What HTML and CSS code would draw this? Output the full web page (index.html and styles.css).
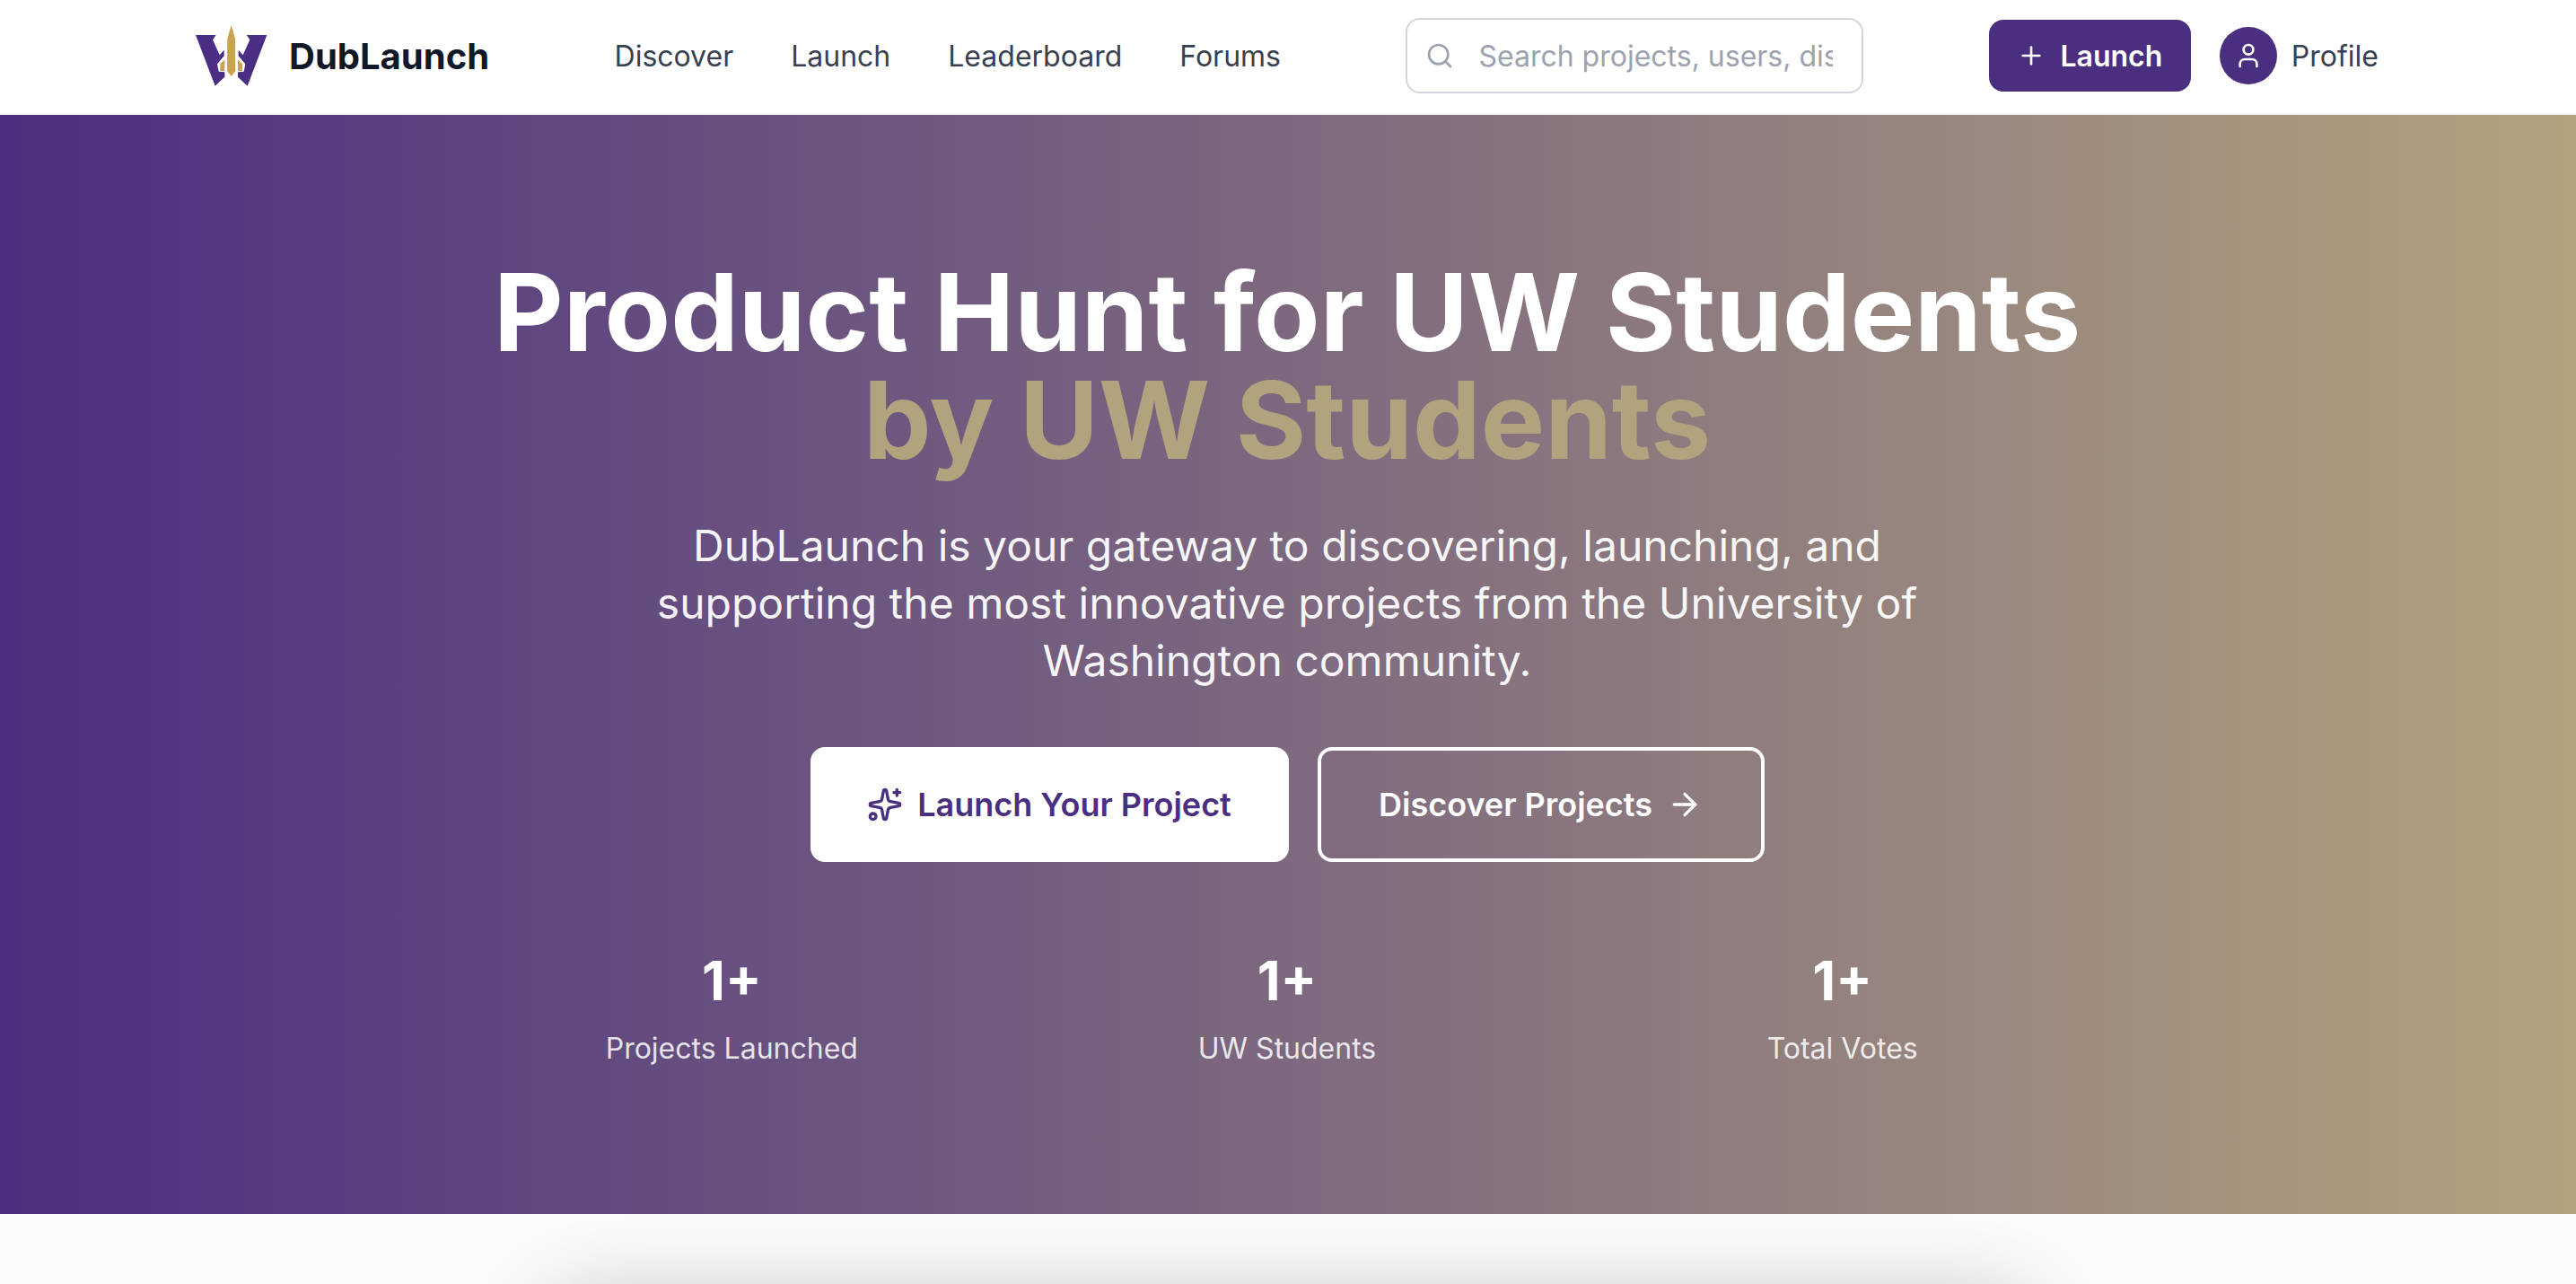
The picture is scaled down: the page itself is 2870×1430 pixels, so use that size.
FILE: index.html
```html
<!DOCTYPE html>
<html lang="en">
<head>
    <meta charset="UTF-8">
    <title>DubLaunch</title>
    <link rel="stylesheet" href="styles.css">
</head>
<body>

<header class="navbar">
    <div class="nav-inner">
        <a href="#" class="brand">
            <svg class="brand-logo" viewBox="40 25 240 204">
                <polygon class="logo-purple" points="40,58 108,58 97,74 120,125 135,108 135,128 112,155 117,180 137,182 137,198 105,228"/>
                <polygon class="logo-purple" points="278,58 210,58 221,74 198,125 183,108 183,128 206,155 201,180 181,182 181,198 213,228"/>
                <polygon class="logo-gold" points="159,25 172,70 173,178 159,196 145,178 146,70"/>
                <polygon class="logo-gold" points="122,155 137,140 137,178 122,178"/>
                <polygon class="logo-gold" points="196,155 181,140 181,178 196,178"/>
            </svg>
            <span>DubLaunch</span>
        </a>

        <nav class="nav-links">
            <a href="#">Discover</a>
            <a href="#">Launch</a>
            <a href="#">Leaderboard</a>
            <a href="#">Forums</a>
        </nav>

        <div class="search-box">
            <svg class="icon search-icon" viewBox="0 0 24 24"><circle cx="11" cy="11" r="8"/><path d="m21 21-4.3-4.3"/></svg>
            <input type="text" placeholder="Search projects, users, discussions...">
        </div>

        <div class="nav-actions">
            <a href="#" class="launch-btn">
                <svg class="icon" viewBox="0 0 24 24"><path d="M5 12h14"/><path d="M12 5v14"/></svg>
                Launch
            </a>
            <a href="#" class="profile-link">
                <span class="avatar">
                    <svg class="icon" viewBox="0 0 24 24"><path d="M19 21v-2a4 4 0 0 0-4-4H9a4 4 0 0 0-4 4v2"/><circle cx="12" cy="7" r="4"/></svg>
                </span>
                Profile
            </a>
        </div>
    </div>
</header>

<section class="hero">
    <h1>Product Hunt for UW Students<br><span class="gold">by UW Students</span></h1>
    <p class="hero-text">DubLaunch is your gateway to discovering, launching, and supporting the most innovative projects from the University of Washington community.</p>

    <div class="hero-buttons">
        <a href="#" class="btn btn-white">
            <svg class="icon" viewBox="0 0 24 24">
                <path d="M11.017 2.814a1 1 0 0 1 1.966 0l1.051 5.558a2 2 0 0 0 1.594 1.594l5.558 1.051a1 1 0 0 1 0 1.966l-5.558 1.051a2 2 0 0 0-1.594 1.594l-1.051 5.558a1 1 0 0 1-1.966 0l-1.051-5.558a2 2 0 0 0-1.594-1.594l-5.558-1.051a1 1 0 0 1 0-1.966l5.558-1.051a2 2 0 0 0 1.594-1.594z"/>
                <path d="M20 2v4"/><path d="M22 4h-4"/><circle cx="4" cy="20" r="2"/>
            </svg>
            Launch Your Project
        </a>
        <a href="#" class="btn btn-outline">
            Discover Projects
            <svg class="icon" viewBox="0 0 24 24"><path d="M5 12h14"/><path d="m12 5 7 7-7 7"/></svg>
        </a>
    </div>

    <div class="stats">
        <div class="stat">
            <div class="stat-number">1+</div>
            <div class="stat-label">Projects Launched</div>
        </div>
        <div class="stat">
            <div class="stat-number">1+</div>
            <div class="stat-label">UW Students</div>
        </div>
        <div class="stat">
            <div class="stat-number">1+</div>
            <div class="stat-label">Total Votes</div>
        </div>
    </div>
</section>

<section class="content">
    <div class="content-card"></div>
</section>

</body>
</html>
```

FILE: styles.css
```css
* {
    box-sizing: border-box;
}

html, body {
    height: 100%;
    overflow: hidden;
}

body {
    margin: 0;
    font-family: 'Inter', 'Liberation Sans', sans-serif;
    background-color: #fbfaf8;
    color: #111827;
}

a {
    text-decoration: none;
    color: inherit;
}

.icon {
    width: 32px;
    height: 32px;
    fill: none;
    stroke: currentColor;
    stroke-width: 2;
    stroke-linecap: round;
    stroke-linejoin: round;
    flex-shrink: 0;
}

.navbar {
    background-color: white;
    height: 128px;
    padding: 0 2px 2px 0;
    border-bottom: 2px solid #f0eff4;
}

.nav-inner {
    max-width: 2560px;
    height: 100%;
    margin: 0 auto;
    padding: 0 64px;
    display: flex;
    justify-content: space-between;
    align-items: center;
}

.brand {
    display: flex;
    align-items: center;
    gap: 24px;
    font-size: 40px;
    font-weight: 700;
    color: #111827;
}

.brand-logo {
    width: 80px;
    height: 68px;
}

.logo-purple {
    fill: #4b2e83;
}

.logo-gold {
    fill: #c9a34e;
}

.nav-links {
    display: flex;
    gap: 64px;
    font-size: 32px;
    color: #374151;
}

.search-box {
    width: 510px;
    height: 84px;
    display: flex;
    align-items: center;
    gap: 27px;
    padding: 0 32px 0 20px;
    border: 2px solid #d1d5db;
    border-radius: 16px;
    background-color: white;
}

.search-icon {
    color: #9ca3af;
}

.search-box input {
    flex: 1;
    min-width: 0;
    border: none;
    outline: none;
    padding: 0;
    font-family: inherit;
    font-size: 32px;
    background: none;
}

.search-box input::placeholder {
    color: #9ca3af;
    opacity: 1;
}

.nav-actions {
    display: flex;
    align-items: center;
    gap: 32px;
}

.launch-btn {
    display: flex;
    align-items: center;
    justify-content: center;
    gap: 16px;
    width: 225px;
    height: 80px;
    background-color: #4a2f80;
    color: white;
    border-radius: 16px;
    font-size: 32px;
    font-weight: 600;
}

.profile-link {
    display: flex;
    align-items: center;
    gap: 16px;
    font-size: 32px;
    color: #374151;
}

.avatar {
    width: 64px;
    height: 64px;
    border-radius: 50%;
    background-color: #4a2f80;
    color: white;
    display: flex;
    align-items: center;
    justify-content: center;
}

.hero {
    height: 1224px;
    padding: 160px 2px 0 0;
    background: linear-gradient(90deg, #4a2f80, #b1a37e);
    color: white;
    text-align: center;
}

.hero h1 {
    margin: 0 0 48px;
    font-size: 120px;
    line-height: 120px;
    font-weight: 700;
}

.gold {
    color: #b1a37e;
}

.hero-text {
    width: 1536px;
    margin: 0 auto 64px;
    font-size: 48px;
    line-height: 64px;
    color: rgba(255, 255, 255, 0.95);
}

.hero-buttons {
    display: flex;
    justify-content: center;
    gap: 32px;
}

.btn {
    display: flex;
    align-items: center;
    justify-content: center;
    gap: 16px;
    height: 128px;
    border-radius: 16px;
    font-size: 36px;
    font-weight: 600;
}

.btn .icon {
    width: 40px;
    height: 40px;
}

.btn-white {
    width: 533px;
    background-color: white;
    color: #4a2f80;
}

.btn-outline {
    width: 498px;
    border: 4px solid white;
    color: white;
}

.stats {
    display: grid;
    grid-template-columns: repeat(3, 1fr);
    gap: 64px;
    width: 1792px;
    margin: 96px auto 0;
}

.stat-number {
    font-size: 60px;
    line-height: 72px;
    font-weight: 700;
}

.stat-label {
    margin-top: 16px;
    font-size: 32px;
    line-height: 48px;
    color: rgba(255, 255, 255, 0.85);
}

.content {
    padding-top: 96px;
}

.content-card {
    width: 1640px;
    height: 800px;
    margin: 0 auto;
    background-color: white;
    border-radius: 32px;
    box-shadow: 0 0 90px rgba(0, 0, 0, 0.24);
}
```
